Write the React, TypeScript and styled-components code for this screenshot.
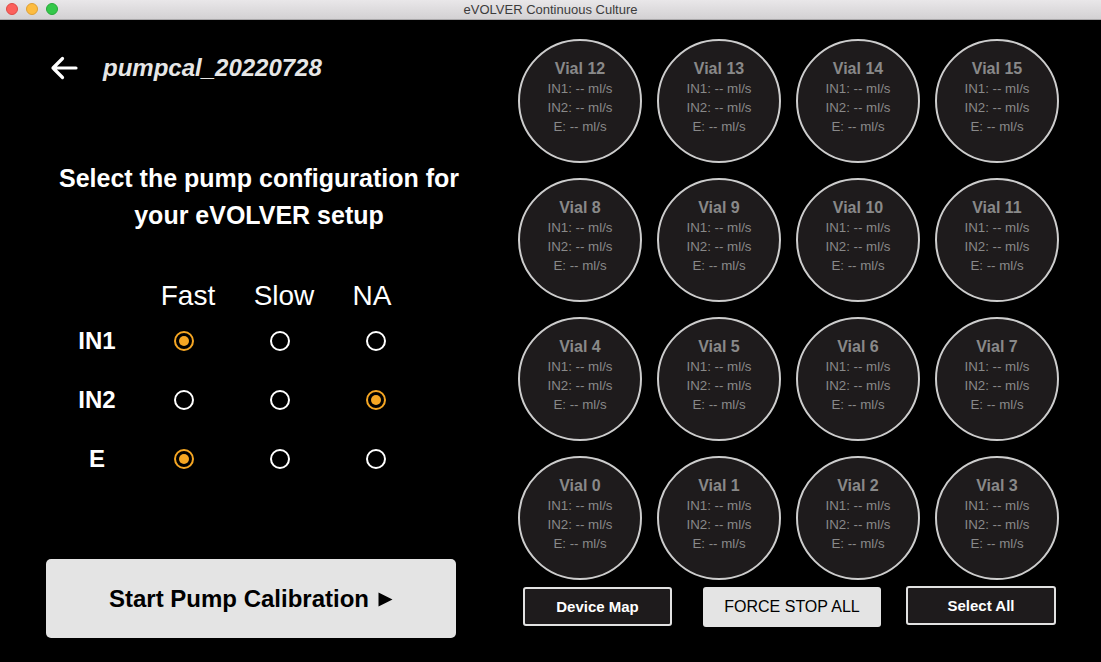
import React from "react";
import styled, { createGlobalStyle } from "styled-components";

const Global = createGlobalStyle`
  html, body { margin: 0; padding: 0; background: #000; }
  body { font-family: "Liberation Sans", Arial, Helvetica, sans-serif; }
  * { box-sizing: border-box; }
`;

const Window = styled.div`
  width: 1101px;
  height: 662px;
  display: flex;
  flex-direction: column;
  background: #000;
  overflow: hidden;
`;

const TitleBar = styled.div`
  height: 20px;
  flex: none;
  display: flex;
  align-items: center;
  position: relative;
  background: linear-gradient(#e9e7e9, #d3d1d3);
  border-bottom: 1px solid #a9a7a9;
`;

const Lights = styled.div`
  display: flex;
  gap: 8px;
  padding-left: 6px;
  margin-top: -1px;
`;

const Light = styled.span<{ $c: string; $b: string }>`
  width: 12px;
  height: 12px;
  border-radius: 50%;
  background: ${(p) => p.$c};
  border: 0.5px solid ${(p) => p.$b};
`;

const WindowTitle = styled.div`
  position: absolute;
  left: 0;
  right: 0;
  top: 2px;
  text-align: center;
  font-size: 13px;
  color: #3c3c3c;
  pointer-events: none;
`;

const Body = styled.div`
  flex: 1;
  display: flex;
`;

const Left = styled.div`
  width: 518px;
  flex: none;
  display: flex;
  flex-direction: column;
  padding: 0 62px 0 46px;
`;

const Header = styled.div`
  margin-top: 36px;
  height: 24px;
  display: flex;
  align-items: center;
  padding-left: 4px;
`;

const BackArrow = styled.svg`
  width: 28px;
  height: 24px;
  flex: none;
`;

const FileName = styled.div`
  margin-left: 25px;
  font-size: 24px;
  font-weight: bold;
  font-style: italic;
  color: #e6e6e6;
`;

const Heading = styled.div`
  margin: 80px -62px 0 -46px;
  text-align: center;
  font-size: 25px;
  line-height: 37px;
  font-weight: bold;
  color: #fff;
`;

const Table = styled.div`
  margin-top: 47px;
  display: grid;
  grid-template-columns: 90px 96px 96px 96px;
  grid-template-rows: 30px 59px 59px 59px;
  align-items: center;
  justify-items: center;
`;

const ColHead = styled.div<{ $dx?: number }>`
  font-size: 28px;
  color: #fff;
  transform: translateX(${(p) => p.$dx ?? 0}px);
`;

const RowHead = styled.div`
  font-size: 24px;
  font-weight: bold;
  color: #fff;
  padding-left: 12px;
`;

const Radio = styled.span<{ $on?: boolean }>`
  width: 20px;
  height: 20px;
  border-radius: 50%;
  border: 2px solid ${(p) => (p.$on ? "#f5a623" : "#fff")};
  display: flex;
  align-items: center;
  justify-content: center;
  &::after {
    content: "";
    width: 10px;
    height: 10px;
    border-radius: 50%;
    background: ${(p) => (p.$on ? "#f5a623" : "transparent")};
  }
`;

const StartButton = styled.button`
  margin-top: 71px;
  width: 410px;
  height: 79px;
  border: none;
  border-radius: 5px;
  background: #e4e4e4;
  color: #000;
  font-family: inherit;
  font-size: 24px;
  font-weight: bold;
  display: flex;
  align-items: center;
  justify-content: center;
  gap: 9px;
  padding: 0;
`;

const PlayIcon = styled.svg`
  width: 15px;
  height: 15px;
  flex: none;
  margin-top: 2px;
`;

const Right = styled.div`
  flex: 1;
  display: flex;
  flex-direction: column;
  padding-top: 19px;
`;

const VialGrid = styled.div`
  display: grid;
  grid-template-columns: repeat(4, 124px);
  grid-auto-rows: 124px;
  gap: 15px;
`;

const Vial = styled.div`
  width: 124px;
  height: 124px;
  border-radius: 50%;
  background: #1e1b1c;
  border: 2px solid #cdcdcd;
  display: flex;
  flex-direction: column;
  align-items: center;
  justify-content: center;
  color: #898989;
  padding-bottom: 8px;
`;

const VialName = styled.div`
  font-size: 16px;
  font-weight: bold;
  line-height: 20px;
`;

const VialLine = styled.div`
  font-size: 13.3px;
  line-height: 19px;
`;

const ButtonRow = styled.div`
  margin-top: 6px;
  margin-left: 5px;
  display: flex;
  align-items: flex-start;
`;

const DarkButton = styled.button<{ $w: number; $dy?: number }>`
  width: ${(p) => p.$w}px;
  height: 39px;
  margin-top: ${(p) => p.$dy ?? 0}px;
  background: #1e1b1c;
  border: 2px solid #e2e2e2;
  border-radius: 3px;
  color: #fff;
  font-family: inherit;
  font-size: 15px;
  font-weight: bold;
  padding: 0;
`;

const LightButton = styled.button`
  width: 178px;
  height: 40px;
  margin: 1px 25px 0 31px;
  background: #e4e4e4;
  border: none;
  border-radius: 3px;
  color: #000;
  font-family: inherit;
  font-size: 16px;
  padding: 0;
`;

const rows = [
  [12, 13, 14, 15],
  [8, 9, 10, 11],
  [4, 5, 6, 7],
  [0, 1, 2, 3],
];

const config: [string, number][] = [
  ["IN1", 0],
  ["IN2", 2],
  ["E", 0],
];

export default function App() {
  return (
    <>
      <Global />
      <Window>
        <TitleBar>
          <Lights>
            <Light $c="#fc605c" $b="#de4a45" />
            <Light $c="#fdbc40" $b="#dea034" />
            <Light $c="#34c84a" $b="#27a93a" />
          </Lights>
          <WindowTitle>eVOLVER Continuous Culture</WindowTitle>
        </TitleBar>
        <Body>
          <Left>
            <Header>
              <BackArrow viewBox="0 0 28 24">
                <path
                  d="M3 12 H26 M12.5 2.5 L3 12 L12.5 21.5"
                  fill="none"
                  stroke="#fff"
                  strokeWidth="3.2"
                  strokeLinecap="round"
                  strokeLinejoin="round"
                />
              </BackArrow>
              <FileName>pumpcal_20220728</FileName>
            </Header>
            <Heading>
              Select the pump configuration for
              <br />
              your eVOLVER setup
            </Heading>
            <Table>
              <span />
              <ColHead $dx={4}>Fast</ColHead>
              <ColHead $dx={4}>Slow</ColHead>
              <ColHead $dx={-4}>NA</ColHead>
              {config.map(([label, sel]) => (
                <React.Fragment key={label}>
                  <RowHead>{label}</RowHead>
                  {[0, 1, 2].map((i) => (
                    <Radio key={i} $on={i === sel} />
                  ))}
                </React.Fragment>
              ))}
            </Table>
            <StartButton>
              Start Pump Calibration
              <PlayIcon viewBox="0 0 15 15">
                <path d="M0.5 0.5 L14.5 7.5 L0.5 14.5 Z" fill="#000" />
              </PlayIcon>
            </StartButton>
          </Left>
          <Right>
            <VialGrid>
              {rows.flat().map((n) => (
                <Vial key={n}>
                  <VialName>Vial {n}</VialName>
                  <VialLine>IN1: -- ml/s</VialLine>
                  <VialLine>IN2: -- ml/s</VialLine>
                  <VialLine>E: -- ml/s</VialLine>
                </Vial>
              ))}
            </VialGrid>
            <ButtonRow>
              <DarkButton $w={149} $dy={1}>Device Map</DarkButton>
              <LightButton>FORCE STOP ALL</LightButton>
              <DarkButton $w={150}>Select All</DarkButton>
            </ButtonRow>
          </Right>
        </Body>
      </Window>
    </>
  );
}
